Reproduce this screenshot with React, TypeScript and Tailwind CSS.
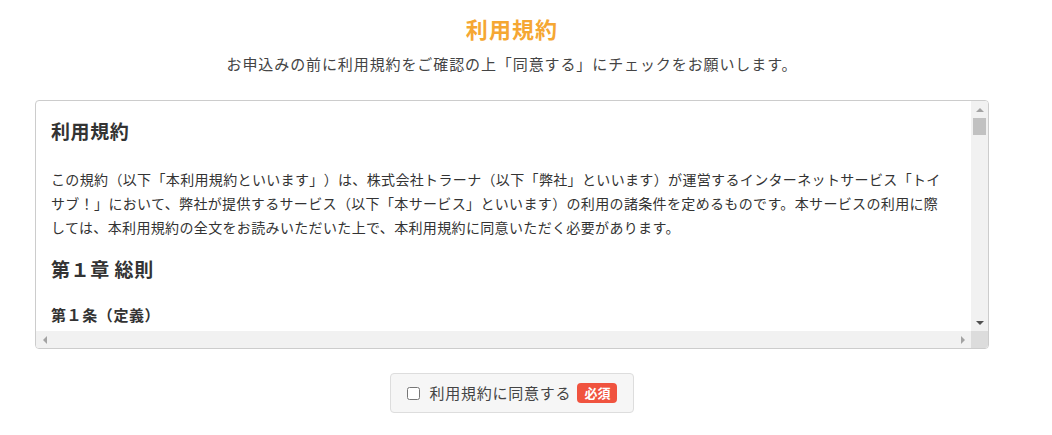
import React, { useState } from 'react';

const jp = '"Noto Sans CJK JP", "Noto Sans", sans-serif';

const App: React.FC = () => {
  const [agreed, setAgreed] = useState(false);

  return (
    <div className="min-h-screen bg-white [text-spacing-trim:space-all]" style={{ fontFamily: jp }}>
      <div className="w-[1024px] px-[35px] pt-[12px]">
        {/* Header */}
        <h1 className="text-center text-[22px] leading-[32px] font-bold tracking-[0.05em] text-[#f5a733]">利用規約</h1>
        <p className="mt-[8px] text-center text-[15px] leading-[24px] tracking-[0.06em] text-[#444]">
          お申込みの前に利用規約をご確認の上「同意する」にチェックをお願いします。
        </p>

        {/* Terms box with scrollbars */}
        <div className="mt-[24px] flex h-[249px] flex-col overflow-hidden rounded-[4px] border border-[#ccc] bg-white">
          <div className="flex min-h-0 flex-1">
            <div className="min-w-0 flex-1 overflow-hidden pl-[15px] pr-[24px] text-[#333]">
              <h2 className="pt-[16px] text-[19px] leading-[28px] font-bold tracking-[0.03em]">利用規約</h2>
              <p className="mt-[22px] text-[14px] leading-[24px] tracking-[0.025em]">
                この規約（以下「本利用規約といいます」）は、株式会社トラーナ（以下「弊社」といいます）が運営するインターネットサービス「トイサブ！」において、弊社が提供するサービス（以下「本サービス」といいます）の利用の諸条件を定めるものです。本サービスの利用に際しては、本利用規約の全文をお読みいただいた上で、本利用規約に同意いただく必要があります。
              </p>
              <h3 className="mt-[16px] text-[19px] leading-[28px] font-bold tracking-[0.03em]">第１章 総則</h3>
              <h4 className="mt-[20px] text-[15px] leading-[24px] font-bold tracking-[0.04em]">第１条（定義）</h4>
              <p className="mt-[12px] text-[14px] leading-[24px] tracking-[0.025em]">
                本利用規約において使用する用語の定義は、次の各号に定めるとおりとします。
              </p>
            </div>

            {/* Vertical scrollbar */}
            <div className="flex w-[17px] shrink-0 flex-col bg-[#f1f1f1]">
              <div className="flex h-[17px] items-center justify-center">
                <div className="h-0 w-0 border-x-[4px] border-b-[4px] border-x-transparent border-b-[#a3a3a3]" />
              </div>
              <div className="mx-[2px] h-[17px] bg-[#c1c1c1]" />
              <div className="flex-1" />
              <div className="flex h-[17px] items-center justify-center">
                <div className="h-0 w-0 border-x-[4px] border-t-[4px] border-x-transparent border-t-[#505050]" />
              </div>
            </div>
          </div>

          {/* Horizontal scrollbar */}
          <div className="flex h-[17px] shrink-0 bg-[#f1f1f1]">
            <div className="flex w-[17px] items-center justify-center">
              <div className="h-0 w-0 border-y-[4px] border-r-[4px] border-y-transparent border-r-[#a3a3a3]" />
            </div>
            <div className="flex-1" />
            <div className="flex w-[17px] items-center justify-center">
              <div className="h-0 w-0 border-y-[4px] border-l-[4px] border-y-transparent border-l-[#a3a3a3]" />
            </div>
            <div className="w-[17px] bg-[#dcdcdc]" />
          </div>
        </div>

        {/* Agree checkbox */}
        <div className="mt-[24px] flex justify-center">
          <label className="flex h-[40px] cursor-pointer items-center rounded-[4px] border border-[#ddd] bg-[#f6f6f6] pl-[16px] pr-[16px]">
            <input
              type="checkbox"
              className="h-[13px] w-[13px]"
              checked={agreed}
              onChange={(e) => setAgreed(e.target.checked)}
            />
            <span className="ml-[10px] text-[15px] leading-[20px] tracking-[0.05em] text-[#444]">利用規約に同意する</span>
            <span className="ml-[6px] rounded-[4px] bg-[#f0533f] px-[7px] text-[13px] leading-[20px] font-bold text-white">必須</span>
          </label>
        </div>
      </div>
    </div>
  );
};

export default App;
